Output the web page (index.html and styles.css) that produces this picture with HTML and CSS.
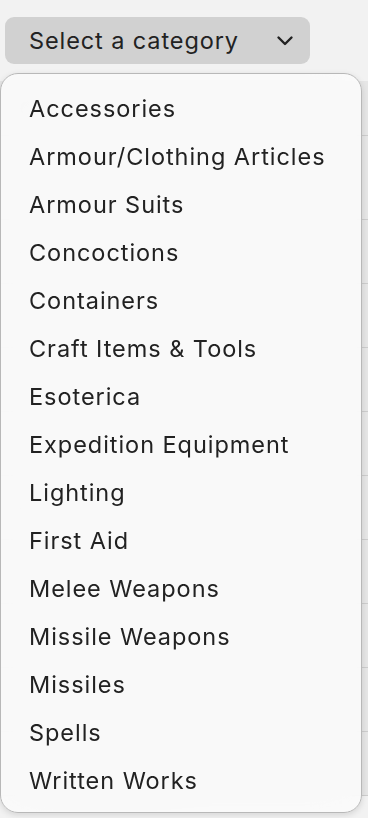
FILE: index.html
```html
<!DOCTYPE html>
<html lang="en">
<head>
<meta charset="utf-8">
<link rel="stylesheet" href="styles.css">
</head>
<body>
<div class="page">
  <div class="toolbar">
    <button class="select">
      <span class="select-label">Select a category</span>
      <svg class="chev" width="18" height="12" viewBox="0 0 18 12"><path d="M2.5 2.5 L9 9 L15.5 2.5" fill="none" stroke="#222" stroke-width="2.4" stroke-linecap="round" stroke-linejoin="round"/></svg>
    </button>
  </div>
  <div class="table">
    <div class="row r1"><span class="blob"></span></div>
    <div class="row r2"><span class="blob wide"></span></div>
    <div class="row"><span class="blob"></span></div>
    <div class="row"><span class="blob wide"></span></div>
    <div class="row"><span class="blob"></span></div>
    <div class="row"><span class="blob wide"></span></div>
    <div class="row"><span class="blob"></span></div>
    <div class="row"><span class="blob wide"></span></div>
    <div class="row"><span class="blob"></span></div>
    <div class="row"><span class="blob wide"></span></div>
    <div class="row"><span class="blob"></span></div>
  </div>
  <ul class="menu">
    <li class="item">Accessories</li>
    <li class="item">Armour/Clothing Articles</li>
    <li class="item">Armour Suits</li>
    <li class="item">Concoctions</li>
    <li class="item">Containers</li>
    <li class="item">Craft Items &amp; Tools</li>
    <li class="item">Esoterica</li>
    <li class="item">Expedition Equipment</li>
    <li class="item">Lighting</li>
    <li class="item">First Aid</li>
    <li class="item">Melee Weapons</li>
    <li class="item">Missile Weapons</li>
    <li class="item">Missiles</li>
    <li class="item">Spells</li>
    <li class="item">Written Works</li>
  </ul>
</div>
</body>
</html>
```
FILE: styles.css
```css
html, body {
  margin: 0;
  padding: 0;
  background: #f2f2f2;
  font-family: Inter, "Liberation Sans", sans-serif;
  color: #222;
  overflow: hidden;
}
.page {
  position: relative;
  width: 368px;
  height: 818px;
}
.toolbar {
  padding: 17px 0 0 5px;
  height: 47px;
}
.select {
  display: flex;
  align-items: center;
  justify-content: space-between;
  width: 305px;
  height: 47px;
  padding: 0 16px 0 24px;
  box-sizing: border-box;
  border: none;
  border-radius: 9px;
  background: #d1d1d1;
  font-family: inherit;
  font-size: 23.5px;
  color: #222;
}
.select-label {
  letter-spacing: 0.9px;
}
.chev {
  display: block;
}
.table {
  margin-top: 17px;
  background: #e6e6e6;
}
.row {
  height: 63px;
  border-bottom: 1px solid #cdcdcd;
  display: flex;
  align-items: center;
  padding-left: 20px;
}
.row.r1 { height: 54px; }
.row.r2 { height: 83px; }
.blob {
  display: block;
  width: 160px;
  height: 14px;
  border-radius: 7px;
  background: #c4c4c4;
}
.blob.wide {
  width: 220px;
}
.menu {
  position: absolute;
  top: 73px;
  left: 0;
  width: 362px;
  height: 740px;
  box-sizing: border-box;
  margin: 0;
  padding: 10px 0 9px 0;
  list-style: none;
  background: rgba(250, 250, 250, 0.95);
  backdrop-filter: blur(24px);
  border: 1px solid #b8b8b8;
  border-radius: 18px;
  box-shadow: 0 2px 6px rgba(0, 0, 0, 0.12);
}
.item {
  height: 48px;
  display: flex;
  align-items: center;
  padding-left: 28px;
  font-size: 23.5px;
  color: #222;
  letter-spacing: 0.95px;
}
```
